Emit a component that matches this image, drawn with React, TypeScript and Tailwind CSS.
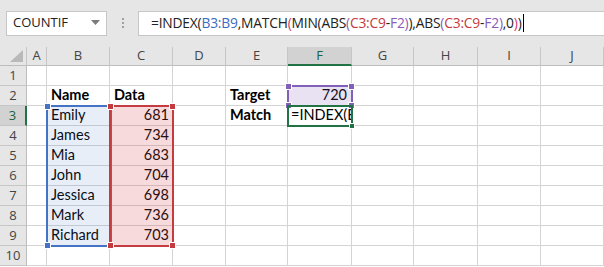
const cols = [
  { key: "", w: 27 },
  { key: "A", w: 20 },
  { key: "B", w: 63 },
  { key: "C", w: 63 },
  { key: "D", w: 53 },
  { key: "E", w: 62 },
  { key: "F", w: 64 },
  { key: "G", w: 62 },
  { key: "H", w: 64 },
  { key: "I", w: 63 },
  { key: "J", w: 63 },
];

const data: Record<number, { b?: string; c?: string; e?: string; bold?: boolean; f?: string }> = {
  2: { b: "Name", c: "Data", e: "Target", bold: true, f: "720" },
  3: { b: "Emily", c: "681", e: "Match", f: "=INDEX(B" },
  4: { b: "James", c: "734" },
  5: { b: "Mia", c: "683" },
  6: { b: "John", c: "704" },
  7: { b: "Jessica", c: "698" },
  8: { b: "Mark", c: "736" },
  9: { b: "Richard", c: "703" },
};

// small corner squares of a referenced range
const handle = "absolute w-[7px] h-[7px] border border-white";

const Formula = () => (
  <span className="text-[#222]">
    =INDEX(<span className="text-[#3b6cc0]">B3:B9</span>,MATCH<span className="text-[#d2386c]">(</span>MIN(ABS
    <span className="text-[#8a5cb8]">(</span>
    <span className="text-[#c53a3c]">C3:C9</span>-<span className="text-[#8a5cb8]">F2</span>
    <span className="text-[#8a5cb8]">)</span>),ABS<span className="text-[#8a5cb8]">(</span>
    <span className="text-[#c53a3c]">C3:C9</span>-<span className="text-[#8a5cb8]">F2</span>
    <span className="text-[#8a5cb8]">)</span>,0<span className="text-[#d2386c]">)</span>)
  </span>
);

export default function App() {
  const rows = [1, 2, 3, 4, 5, 6, 7, 8, 9, 10];
  const template = cols.map((c) => `${c.w}px`).join(" ");

  return (
    <div className="w-[604px] h-[267px] overflow-hidden bg-white font-['Lato',sans-serif]">
      {/* Formula bar */}
      <div className="h-[47px] bg-[#e6e6e6] flex items-center pl-[6px] pb-[1px]">
        <div className="w-[101px] h-[25px] bg-white border border-[#c6c6c6] flex items-center justify-between pl-[6px] pr-[6px] font-['Open_Sans',sans-serif] text-[13px] text-[#222]">
          <span>COUNTIF</span>
          <svg width="9" height="6" viewBox="0 0 9 6">
            <path d="M0 0h9L4.5 5z" fill="#7a7a7a" />
          </svg>
        </div>
        <div className="w-[31px] flex flex-col items-center gap-[2px]">
          <div className="w-[2px] h-[2px] bg-[#a0a0a0]" />
          <div className="w-[2px] h-[2px] bg-[#a0a0a0]" />
          <div className="w-[2px] h-[2px] bg-[#a0a0a0]" />
        </div>
        <div className="flex-1 h-[25px] bg-white border border-[#c6c6c6] border-r-0 flex items-center pl-[12px] font-['Open_Sans',sans-serif] text-[13.8px] tracking-[-0.2px] whitespace-nowrap">
          <Formula />
          <span className="inline-block w-[1px] h-[18px] bg-black ml-[1px]" />
        </div>
      </div>

      {/* Grid */}
      <div className="relative grid" style={{ gridTemplateColumns: template }}>
        {/* header row */}
        {cols.map((c, i) => (
          <div
            key={c.key || "corner"}
            className={`h-[19px] flex items-center justify-center font-['Open_Sans',sans-serif] text-[13px] border-r border-[#c6c6c6] ${
              c.key === "F"
                ? "bg-[#d2d2d2] text-[#21613f] border-b-2 border-b-[#217346]"
                : "bg-[#e6e6e6] text-[#444] border-b border-b-[#bdbdbd]"
            } ${i === 0 ? "items-end justify-end pr-[3px] pb-[3px]" : ""}`}
          >
            {i === 0 ? (
              <svg width="13" height="12" viewBox="0 0 13 12">
                <path d="M13 0v12H0z" fill="#b9b9b9" />
              </svg>
            ) : (
              c.key
            )}
          </div>
        ))}

        {rows.map((r) => {
          const d = data[r] || {};
          return cols.map((c, i) => {
            if (i === 0) {
              return (
                <div
                  key={`${r}-h`}
                  className={`h-[20px] flex items-center justify-center font-['Open_Sans',sans-serif] text-[13px] border-b border-[#c6c6c6] ${
                    r === 3
                      ? "bg-[#d2d2d2] text-[#21613f] border-r-2 border-r-[#217346]"
                      : "bg-[#e6e6e6] text-[#444] border-r border-r-[#bdbdbd]"
                  }`}
                >
                  {r}
                </div>
              );
            }
            let content: string | undefined;
            let align = "justify-start pl-[4px]";
            if (c.key === "B") content = d.b;
            if (c.key === "C") {
              content = d.c;
              if (r > 2) align = "justify-end pr-[3px]";
            }
            if (c.key === "E") content = d.e;
            if (c.key === "F") {
              content = d.f;
              align = r === 2 ? "justify-end pr-[4px]" : "justify-start pl-[3px]";
            }
            const bold = (d.bold && c.key !== "F") || c.key === "E" ? "font-bold" : "";
            return (
              <div
                key={`${r}-${c.key}`}
                className={`h-[20px] flex items-end pb-[1px] overflow-hidden whitespace-nowrap border-r border-b border-[#d4d4d4] text-[14.5px] leading-[18px] text-black ${align} ${bold}`}
              >
                {content}
              </div>
            );
          });
        })}

        {/* B3:B9 highlight */}
        <div className="absolute left-[46px] top-[58px] w-[66px] h-[142px] border-2 border-[#4472c4] bg-[#4472c4]/[0.12]">
          <div className={`${handle} -left-[4px] -top-[4px] bg-[#4472c4]`} />
          <div className={`${handle} -left-[4px] -bottom-[4px] bg-[#4472c4]`} />
        </div>
        {/* C3:C9 highlight */}
        <div className="absolute left-[109px] top-[58px] w-[65px] h-[142px] border-2 border-[#c43b40] bg-[#d8454a]/[0.2]">
          <div className={`${handle} -left-[4px] -top-[4px] bg-[#c43b40]`} />
          <div className={`${handle} -right-[4px] -top-[4px] bg-[#c43b40]`} />
          <div className={`${handle} -left-[4px] -bottom-[4px] bg-[#c43b40]`} />
          <div className={`${handle} -right-[4px] -bottom-[4px] bg-[#c43b40]`} />
        </div>
        {/* F2 highlight */}
        <div className="absolute left-[287px] top-[38px] w-[66px] h-[22px] border-2 border-[#8060b8] bg-[#8060b8]/[0.18]">
          <div className={`${handle} -left-[4px] -top-[4px] bg-[#8060b8]`} />
          <div className={`${handle} -right-[4px] -top-[4px] bg-[#8060b8]`} />
          <div className={`${handle} -left-[4px] -bottom-[4px] bg-[#8060b8]`} />
          <div className={`${handle} -right-[4px] -bottom-[4px] bg-[#8060b8]`} />
        </div>
        {/* F3 active cell */}
        <div className="absolute left-[287px] top-[58px] w-[66px] h-[22px] border-2 border-[#217346]">
          <div className="absolute -right-[4px] -bottom-[4px] w-[6px] h-[6px] bg-[#217346] border border-white" />
        </div>
      </div>
    </div>
  );
}
